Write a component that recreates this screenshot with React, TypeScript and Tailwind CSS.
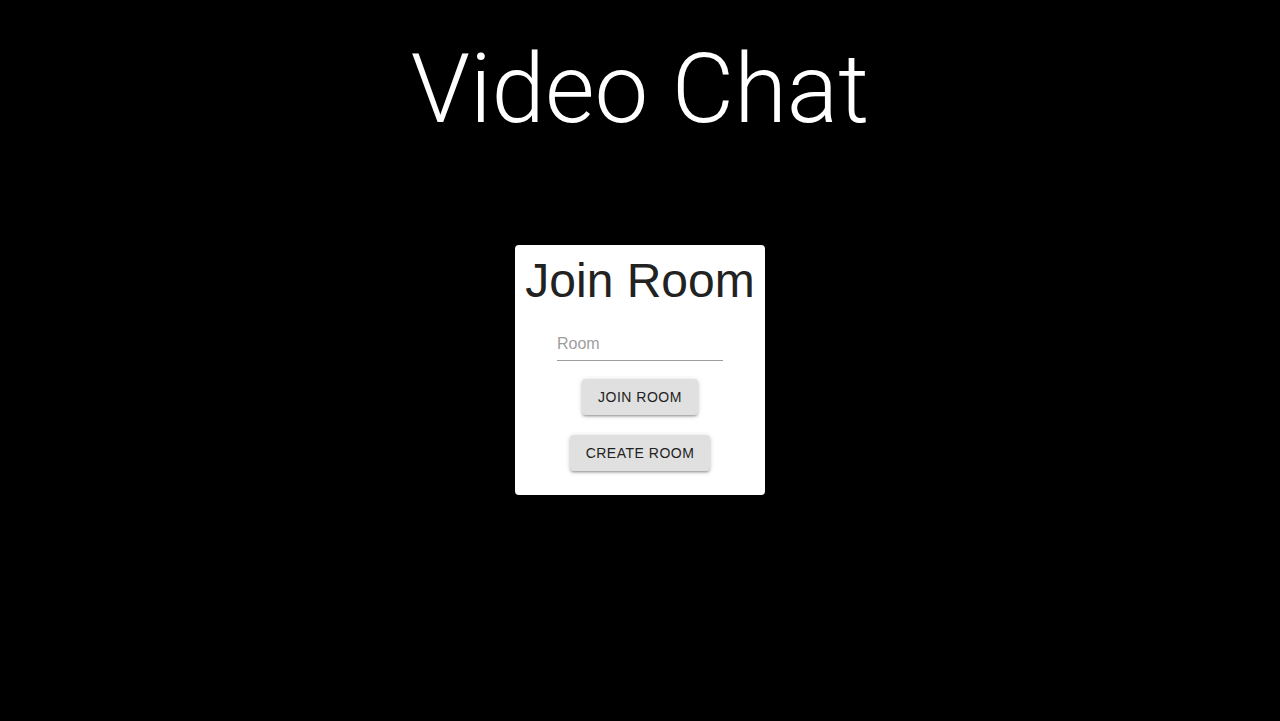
import React from "react";

const btn =
  "h-9 px-4 rounded-sm bg-[#e0e0e0] text-sm text-[#222] tracking-[0.5px] uppercase shadow-[0_2px_2px_0_rgba(0,0,0,0.14),0_3px_1px_-2px_rgba(0,0,0,0.12),0_1px_5px_0_rgba(0,0,0,0.2)]";

export default function App() {
  return (
    <div className="min-h-screen bg-black flex flex-col items-center font-['Liberation_Sans',Arial,sans-serif]">
      <h1 className="mt-[41px] text-white text-[96px] leading-none font-light font-['Roboto',sans-serif]">
        Video Chat
      </h1>

      {/* Join card */}
      <div className="mt-[108px] w-[250px] h-[250px] bg-white rounded flex flex-col items-center pt-3">
        <h2 className="text-[48px] leading-none text-[#222]">Join Room</h2>

        <input
          type="text"
          placeholder="Room"
          className="mt-[26px] w-[166px] h-[30px] pb-1 border-b border-[#9e9e9e] text-base text-[#222] placeholder:text-[#9e9e9e] outline-none bg-transparent"
        />

        <button className={`mt-[18px] ${btn}`}>Join Room</button>
        <button className={`mt-5 ${btn}`}>Create Room</button>
      </div>
    </div>
  );
}
